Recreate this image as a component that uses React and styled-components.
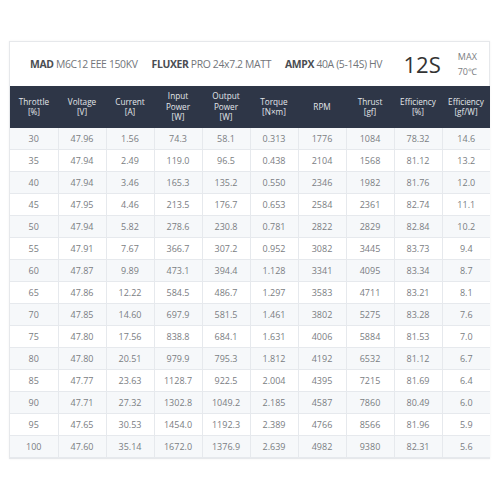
import React from "react";
import styled, { createGlobalStyle } from "styled-components";

const Global = createGlobalStyle`
  html, body { margin: 0; padding: 0; background: #fff; }
  body { font-family: "Open Sans", "Liberation Sans", sans-serif; }
`;

const Page = styled.div`
  width: 500px;
  height: 500px;
  padding: 41px 10px 0 9px;
  box-sizing: border-box;
`;

const Card = styled.div`
  width: 481px;
  border: 1px solid #e6e8eb;
  box-shadow: 0 0 2px rgba(0,0,0,0.06);
  box-sizing: border-box;
`;

const TitleBar = styled.div`
  height: 44px;
  display: flex;
  align-items: center;
  padding: 0 12px 0 20px;
  font-size: 10.4px;
  letter-spacing: -0.35px;
  color: #72757a;
`;

const Item = styled.span`
  margin-right: 14px;
  white-space: nowrap;
  b { font-weight: 700; color: #4a4d52; }
`;

const Big = styled.span`
  margin-left: auto;
  font-size: 22px;
  letter-spacing: 0;
  color: #333;
`;

const Max = styled.div`
  margin-left: 17px;
  font-size: 9px;
  letter-spacing: 0;
  line-height: 15px;
  color: #7a7d82;
  text-align: center;
`;

const Table = styled.table`
  border-collapse: collapse;
  width: 480px;
  table-layout: fixed;
`;

const Th = styled.th`
  background: #2e3647;
  color: #e3e6ea;
  font-weight: 400;
  font-size: 8.2px;
  line-height: 10.5px;
  height: 42px;
  width: 48px;
  padding: 0;
  text-align: center;
  vertical-align: middle;
`;

const Tr = styled.tr`
  background: ${p => (p.$alt ? "#f6f8fa" : "#fff")};
`;

const Td = styled.td`
  height: 21px;
  padding: 0;
  font-size: 9px;
  color: #7a7d82;
  text-align: center;
  border: 1px solid #e6e9ed;
  border-top: none;
  &:first-child { border-left: none; }
  &:last-child { border-right: none; }
`;

const headers = [
  ["Throttle", "[%]"],
  ["Voltage", "[V]"],
  ["Current", "[A]"],
  ["Input", "Power", "[W]"],
  ["Output", "Power", "[W]"],
  ["Torque", "[N×m]"],
  ["RPM"],
  ["Thrust", "[gf]"],
  ["Efficiency", "[%]"],
  ["Efficiency", "[gf/W]"],
];

const rows = [
  ["30", "47.96", "1.56", "74.3", "58.1", "0.313", "1776", "1084", "78.32", "14.6"],
  ["35", "47.94", "2.49", "119.0", "96.5", "0.438", "2104", "1568", "81.12", "13.2"],
  ["40", "47.94", "3.46", "165.3", "135.2", "0.550", "2346", "1982", "81.76", "12.0"],
  ["45", "47.95", "4.46", "213.5", "176.7", "0.653", "2584", "2361", "82.74", "11.1"],
  ["50", "47.94", "5.82", "278.6", "230.8", "0.781", "2822", "2829", "82.84", "10.2"],
  ["55", "47.91", "7.67", "366.7", "307.2", "0.952", "3082", "3445", "83.73", "9.4"],
  ["60", "47.87", "9.89", "473.1", "394.4", "1.128", "3341", "4095", "83.34", "8.7"],
  ["65", "47.86", "12.22", "584.5", "486.7", "1.297", "3583", "4711", "83.21", "8.1"],
  ["70", "47.85", "14.60", "697.9", "581.5", "1.461", "3802", "5275", "83.28", "7.6"],
  ["75", "47.80", "17.56", "838.8", "684.1", "1.631", "4006", "5884", "81.53", "7.0"],
  ["80", "47.80", "20.51", "979.9", "795.3", "1.812", "4192", "6532", "81.12", "6.7"],
  ["85", "47.77", "23.63", "1128.7", "922.5", "2.004", "4395", "7215", "81.69", "6.4"],
  ["90", "47.71", "27.32", "1302.8", "1049.2", "2.185", "4587", "7860", "80.49", "6.0"],
  ["95", "47.65", "30.53", "1454.0", "1192.3", "2.389", "4766", "8566", "81.96", "5.9"],
  ["100", "47.60", "35.14", "1672.0", "1376.9", "2.639", "4982", "9380", "82.31", "5.6"],
];

export default function App() {
  return (
    <>
      <Global />
      <Page>
        <Card>
          <TitleBar>
            <Item><b>MAD</b> M6C12 EEE 150KV</Item>
            <Item><b>FLUXER</b> PRO 24x7.2 MATT</Item>
            <Item><b>AMPX</b> 40A (5-14S) HV</Item>
            <Big>12S</Big>
            <Max>MAX<br />70℃</Max>
          </TitleBar>
          <Table>
            <thead>
              <tr>
                {headers.map((h, i) => (
                  <Th key={i}>
                    {h.map((l, j) => (
                      <React.Fragment key={j}>
                        {j > 0 && <br />}
                        {l}
                      </React.Fragment>
                    ))}
                  </Th>
                ))}
              </tr>
            </thead>
            <tbody>
              {rows.map((r, i) => (
                <Tr key={i} $alt={i % 2 === 0}>
                  {r.map((c, j) => (
                    <Td key={j}>{c}</Td>
                  ))}
                </Tr>
              ))}
            </tbody>
          </Table>
        </Card>
      </Page>
    </>
  );
}
